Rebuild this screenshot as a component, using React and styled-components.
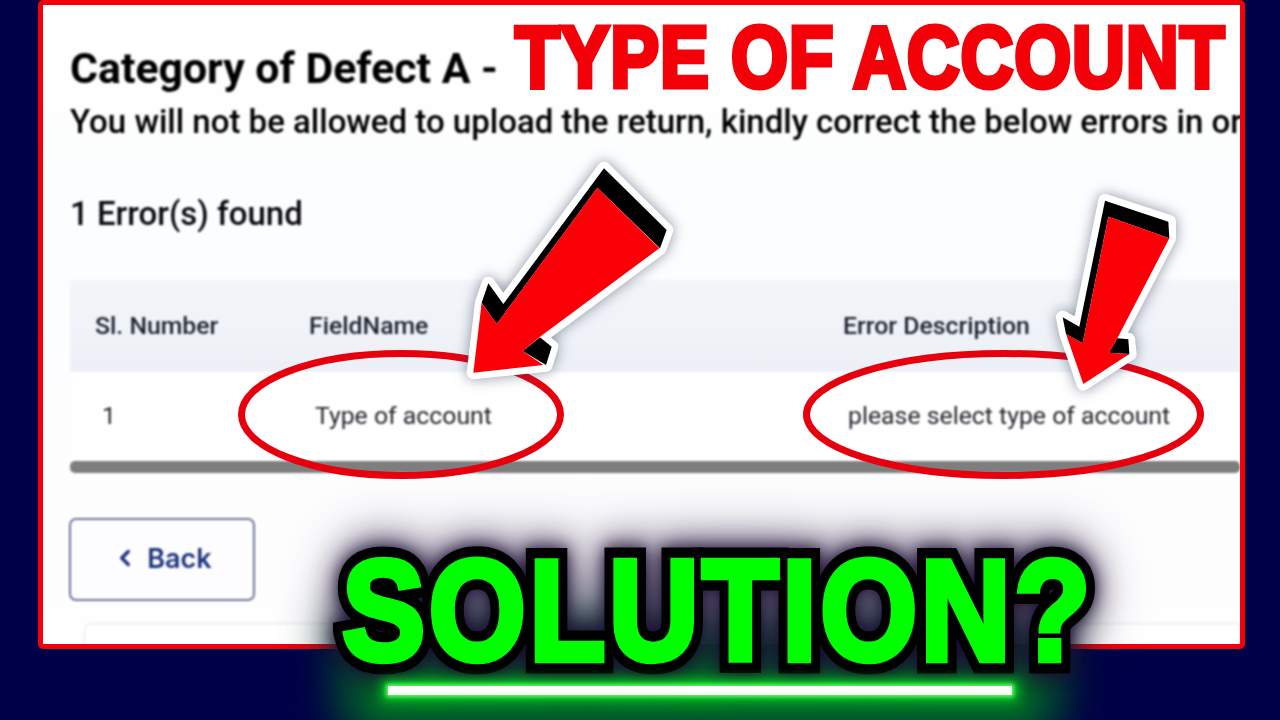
import React from "react";
import styled, { createGlobalStyle } from "styled-components";
import { ChevronLeft } from "lucide-react";

const Global = createGlobalStyle`
  html, body { margin: 0; padding: 0; background: #000048; }
  body { font-family: Roboto, "Liberation Sans", sans-serif; }
`;

const Stage = styled.div`
  position: relative;
  width: 1280px;
  height: 720px;
  overflow: hidden;
  background: #000048;
`;

const Panel = styled.main`
  box-sizing: border-box;
  width: 1207px;
  height: 649px;
  margin-left: 38px;
  border: 5px solid #f30008;
  border-radius: 5px;
  background: linear-gradient(180deg, #ffffff 0%, #fcfdfe 30%, #fefeff 100%);
  overflow: hidden;
  padding-left: 27px;
`;

const Blurred = styled.div`
  filter: blur(0.8px);
`;

const HeadRow = styled.div`
  display: flex;
  align-items: center;
  height: 100px;
  padding-top: 5px;
  box-sizing: border-box;
  white-space: nowrap;
`;

const Heading = styled.h1`
  margin: 0;
  width: 445px;
  font-size: 42.8px;
  font-weight: 700;
  color: #000;
  padding-top: 21px;
  filter: blur(0.8px);
`;

const BigRed = styled.span`
  display: inline-block;
  width: 710px;
  font-family: "Liberation Sans", Arial, sans-serif;
  font-size: 88px;
  line-height: 1;
  font-weight: 700;
  color: #f30008;
  -webkit-text-stroke: 5px #f30008;
  letter-spacing: 1px;
  transform: translateY(-1px) scaleX(0.833);
  transform-origin: left center;
`;

const Sub = styled.p`
  margin: 0;
  font-size: 33px;
  line-height: 34px;
  color: #000;
  white-space: nowrap;
  font-weight: 500;
`;

const Count = styled.p`
  margin: 58px 0 0;
  font-size: 33px;
  line-height: 34px;
  color: #08090c;
  font-weight: 500;
`;

const Table = styled.section`
  width: 1170px;
  margin-top: 49px;
`;

const Row = styled.div`
  display: grid;
  grid-template-columns: ${p => (p.$head ? "214px 534px 1fr" : "213px 533px 1fr")};
  align-items: center;
  height: ${p => (p.$head ? "92px" : "88px")};
  padding-left: ${p => (p.$head ? "25px" : "32px")};
  box-sizing: border-box;
  background: ${p => (p.$head ? "linear-gradient(180deg, #f3f5f9 0%, #edf1f7 100%)" : "#fff")};
`;

const HeadCell = styled.span`
  font-size: 24.8px;
  font-weight: 500;
  color: #1c2230;
  line-height: 1;
`;

const Cell = styled.span`
  font-size: 24.8px;
  font-weight: 400;
  color: #24272e;
  white-space: nowrap;
  line-height: 1;
`;

const Scrollbar = styled.div`
  height: 12px;
  margin-top: 1px;
  border-radius: 5px;
  background: #7d7e7e;
`;

const BackButton = styled.button`
  display: flex;
  align-items: center;
  justify-content: center;
  gap: 9px;
  width: 186px;
  height: 83px;
  margin-top: 45px;
  margin-left: -1px;
  background: #fdfdff;
  border: 2px solid #6f7598;
  border-radius: 7px;
  color: #1b3480;
  font-family: Inter, Roboto, sans-serif;
  font-size: 27px;
  font-weight: 600;
  padding: 0 0 3px 0;
`;

const FooterCard = styled.div`
  height: 60px;
  margin: 22px 0 0 14px;
  background: #fff;
  border: 1px solid #e4e4ec;
  border-radius: 8px 0 0 0;
`;

const Overlay = styled.svg`
  position: absolute;
  left: ${p => p.$x}px;
  top: ${p => p.$y}px;
  overflow: visible;
`;

const ArrowSvg = styled(Overlay)`
  filter: drop-shadow(0 0 7px rgba(50, 60, 90, 0.55));
`;

const Halo = styled.div`
  position: absolute;
  left: 388px;
  top: 686px;
  width: 624px;
  height: 9px;
  box-shadow: 0 0 20px 14px #007f24, 0 0 40px 34px #006a2c, 0 -20px 50px 50px #004f2c;
`;

const NeonLine = styled.div`
  position: absolute;
  left: 388px;
  top: 686px;
  width: 624px;
  height: 9px;
  background: #ffffff;
  box-shadow: 0 0 4px 2px #60ff60, 0 0 12px 6px #00c820;
`;

const Solution = styled.div`
  position: absolute;
  left: 342px;
  top: 536px;
  width: 900px;
  font-family: "Liberation Sans", Arial, sans-serif;
  font-size: 143px;
  line-height: 150px;
  font-weight: 700;
  color: #00ff00;
  white-space: nowrap;
  letter-spacing: 4px;
  transform: scaleX(0.872);
  transform-origin: left top;
  -webkit-text-stroke: 6.5px #00ff00;
  filter: drop-shadow(0 0 8px rgba(25, 10, 50, 0.8)) drop-shadow(0 0 16px rgba(25, 10, 50, 0.7)) drop-shadow(0 0 28px rgba(25, 10, 50, 0.4));

  &::before {
    content: "SOLUTION?";
    position: absolute;
    left: 0;
    top: 0;
    z-index: -1;
    color: #000;
    -webkit-text-stroke: 27px #000;
  }
`;

const SolutionLayer = styled.div`
  position: absolute;
  inset: 0;
  isolation: isolate;
`;

const arrow1 = {
  outline: "492,55 680,240 660,295 300,562 335,590 318,645 100,668 125,458 145,400 190,462",
  black: ["492,55 680,240 660,295 472,113 170,522 125,458 145,400 190,462", "300,562 335,590 318,645 248,603"],
  red: "472,113 658,295 300,560 248,603 310,645 100,668 125,458 170,522",
};

const arrow2 = {
  outline: "195,62 388,125 388,175 232,475 265,478 270,522 130,612 78,462 68,412 118,440",
  black: ["195,62 385,125 388,175 205,110 128,490 78,462 68,412 118,440", "232,475 265,478 268,522 207,518"],
  red: "205,110 388,175 232,475 207,518 268,522 130,612 78,462 128,490",
};

function Arrow({ x, y, w, h, shape }) {
  return (
    <ArrowSvg $x={x} $y={y} width={w} height={h} viewBox={`0 0 ${w * 3} ${h * 3}`}>
      <polygon points={shape.outline} fill="#fff" stroke="#fff" strokeWidth="40" strokeLinejoin="round" />
      {shape.black.map(p => <polygon key={p} points={p} fill="#000" />)}
      <polygon points={shape.red} fill="#fb0006" />
    </ArrowSvg>
  );
}

export default function App() {
  return (
    <Stage>
      <Global />
      <Panel>
        <HeadRow>
          <Heading>Category of Defect A -</Heading>
          <BigRed>TYPE OF ACCOUNT</BigRed>
        </HeadRow>
        <Blurred>
          <Sub>You will not be allowed to upload the return, kindly correct the below errors in or</Sub>
          <Count>1 Error(s) found</Count>
          <Table>
            <Row $head>
              <HeadCell>Sl. Number</HeadCell>
              <HeadCell>FieldName</HeadCell>
              <HeadCell>Error Description</HeadCell>
            </Row>
            <Row>
              <Cell>1</Cell>
              <Cell>Type of account</Cell>
              <Cell>please select type of account</Cell>
            </Row>
            <Scrollbar />
          </Table>
          <BackButton><ChevronLeft size={26} strokeWidth={3.2} />Back</BackButton>
          <FooterCard />
        </Blurred>
      </Panel>

      <Overlay $x={238} $y={350} width="326" height="129" viewBox="0 0 326 129">
        <ellipse cx="163" cy="64.5" rx="159.5" ry="61" fill="none" stroke="#e6000e" strokeWidth="7" />
      </Overlay>
      <Overlay $x={803} $y={350} width="401" height="129" viewBox="0 0 401 129">
        <ellipse cx="200.5" cy="64.5" rx="197" ry="61" fill="none" stroke="#e6000e" strokeWidth="7" />
      </Overlay>
      <Arrow x={440} y={150} w={260} h={240} shape={arrow1} />
      <Arrow x={1040} y={180} w={240} h={220} shape={arrow2} />

      <Halo />
      <SolutionLayer>
        <Solution>SOLUTION?</Solution>
      </SolutionLayer>
      <NeonLine />
    </Stage>
  );
}
